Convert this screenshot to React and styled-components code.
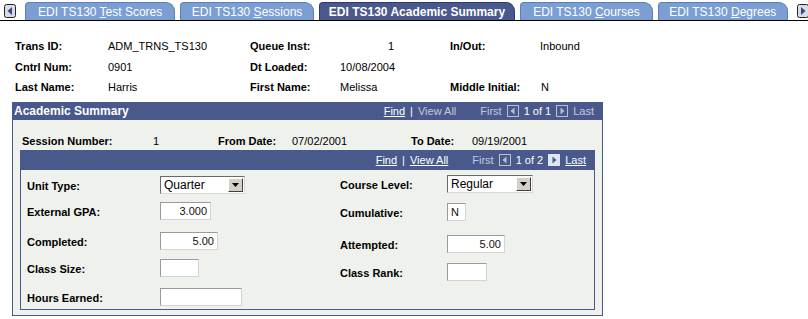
import React from 'react'
import styled, { createGlobalStyle } from 'styled-components'

const navy = '#4A598C'
const paper = '#EFF1EC'

const GlobalStyle = createGlobalStyle`
body {
    margin: 0;
    background: #fff;
    font-family: "Liberation Sans", Arial, sans-serif;
    font-size: 11px;
    color: #000;
}
`

const ScrollArrow = ({ dir }) => (
    <ScrollBtn dir={dir}>
        <svg width="12" height="14" viewBox="0 0 12 14">
            <rect x="0.5" y="0.5" width="11" height="13" rx="2" fill="#d8dce6" stroke="#222" />
            {dir === 'left'
                ? <path d="M8 3 L8 11 L3.5 7 Z" fill="#3a4a7c" />
                : <path d="M4 3 L4 11 L8.5 7 Z" fill="#3a4a7c" />}
        </svg>
    </ScrollBtn>
)

const NavButton = ({ dir, on }) => (
    <NavBtn on={on ? 1 : 0}>
        <svg width="10" height="10" viewBox="0 0 10 10">
            {dir === 'left'
                ? <path d="M6.5 1.5 L6.5 8.5 L2.5 5 Z" fill={on ? navy : '#b9bfd1'} />
                : <path d="M3.5 1.5 L3.5 8.5 L7.5 5 Z" fill={on ? navy : '#b9bfd1'} />}
        </svg>
    </NavBtn>
)

const Nav = ({ total, viewAll, last }) => (
    <NavBar>
        <NavItem on={1}>Find</NavItem>
        <span>|</span>
        <NavItem on={viewAll ? 1 : 0}>View All</NavItem>
        <NavItem gap={19}>First</NavItem>
        <NavButton dir="left" />
        <span>1 of {total}</span>
        <NavButton dir="right" on={last} />
        <NavItem on={last ? 1 : 0}>Last</NavItem>
    </NavBar>
)

const Select = ({ value, width }) => (
    <SelectBox width={width}>
        <span>{value}</span>
        <DropBtn>
            <svg width="7" height="4" viewBox="0 0 7 4"><path d="M0 0 L7 0 L3.5 4 Z" fill="#000" /></svg>
        </DropBtn>
    </SelectBox>
)

const App = () => {
    return (
        <Page>
            <GlobalStyle />
            <TabBar>
                <ScrollArrow dir="left" />
                <Tab pad={12}>EDI TS130 <u>T</u>est Scores</Tab>
                <Tab>EDI TS130 <u>S</u>essions</Tab>
                <Tab active pad={9}>EDI TS130 Academic Summary</Tab>
                <Tab pad={12}>EDI TS130 <u>C</u>ourses</Tab>
                <Tab>EDI TS130 <u>D</u>egrees</Tab>
                <ScrollArrow dir="right" />
            </TabBar>

            <HeaderGrid>
                <Label>Trans ID:</Label>
                <Value>ADM_TRNS_TS130</Value>
                <Label>Queue Inst:</Label>
                <Value indent={48}>1</Value>
                <Label>In/Out:</Label>
                <Value>Inbound</Value>

                <Label>Cntrl Num:</Label>
                <Value>0901</Value>
                <Label>Dt Loaded:</Label>
                <Value>10/08/2004</Value>
                <span />
                <span />

                <Label>Last Name:</Label>
                <Value>Harris</Value>
                <Label>First Name:</Label>
                <Value>Melissa</Value>
                <Label>Middle Initial:</Label>
                <Value indent={1}>N</Value>
            </HeaderGrid>

            <Panel>
                <PanelHead>
                    <PanelTitle>Academic Summary</PanelTitle>
                    <Nav total={1} />
                </PanelHead>
                <PanelBody>
                    <SessionRow>
                        <Label>Session Number:</Label>
                        <Value>1</Value>
                        <Label>From Date:</Label>
                        <Value>07/02/2001</Value>
                        <Label>To Date:</Label>
                        <Value>09/19/2001</Value>
                    </SessionRow>
                    <Grid>
                        <GridHead>
                            <Nav total={2} viewAll last />
                        </GridHead>
                        <GridBody>
                            <Column labelWidth={133}>
                                <Field top={6}>
                                    <Label>Unit Type:</Label>
                                    <Select value="Quarter" width={85} />
                                </Field>
                                <Field top={8}>
                                    <Label>External GPA:</Label>
                                    <Input width={51} readOnly value="3.000" />
                                </Field>
                                <Field top={12}>
                                    <Label>Completed:</Label>
                                    <Input width={58} readOnly value="5.00" />
                                </Field>
                                <Field top={9}>
                                    <Label>Class Size:</Label>
                                    <Input width={39} readOnly value="" />
                                </Field>
                                <Field top={11}>
                                    <Label>Hours Earned:</Label>
                                    <Input width={82} readOnly value="" />
                                </Field>
                            </Column>
                            <Column labelWidth={107}>
                                <Field top={5}>
                                    <Label>Course Level:</Label>
                                    <Select value="Regular" width={86} />
                                </Field>
                                <Field top={10}>
                                    <Label>Cumulative:</Label>
                                    <Input width={19} align="left" readOnly value="N" />
                                </Field>
                                <Field top={14}>
                                    <Label>Attempted:</Label>
                                    <Input width={58} readOnly value="5.00" />
                                </Field>
                                <Field top={10}>
                                    <Label>Class Rank:</Label>
                                    <Input width={40} readOnly value="" />
                                </Field>
                            </Column>
                        </GridBody>
                    </Grid>
                </PanelBody>
            </Panel>
        </Page>
    )
}

const Page = styled.div`
width: 808px;
`
const TabBar = styled.div`
display: flex;
align-items: flex-end;
height: 19px;
margin-top: 1px;
padding-left: 3px;
border-bottom: 1px solid #000;
`
const ScrollBtn = styled.span`
display: flex;
align-self: center;
margin: 0 9px 0 1px;
${({ dir }) => dir === 'right' && 'margin: 0 0 0 4px;'}
`
const Tab = styled.div`
height: 17px;
line-height: 18px;
padding: 0 ${({ pad }) => pad || 10.5}px;
margin-right: 5px;
font-size: 12px;
white-space: nowrap;
color: #fff;
font-weight: ${({ active }) => (active ? 'bold' : 'normal')};
background: ${({ active }) => (active ? navy : '#7B9FD2')};
border: 1px solid ${({ active }) => (active ? '#2f3b66' : '#5d7fb3')};
border-bottom: none;
border-radius: 4px 9px 0 0;
`
const HeaderGrid = styled.div`
display: grid;
grid-template-columns: 93px 142px 90px 110px 90px auto;
grid-auto-rows: 20.5px;
align-items: center;
padding: 15px 0 0 15px;
`
const Label = styled.span`
font-weight: bold;
white-space: nowrap;
`
const Value = styled.span`
padding-left: ${({ indent }) => indent || 0}px;
white-space: nowrap;
`
const Panel = styled.div`
width: 589px;
margin: 4px 0 0 12px;
border: 1px solid ${navy};
background: ${paper};
`
const PanelHead = styled.div`
display: flex;
align-items: center;
justify-content: space-between;
height: 17px;
background: ${navy};
padding: 0 8px 0 1px;
`
const PanelTitle = styled.span`
color: #fff;
font-weight: bold;
font-size: 12px;
`
const NavBar = styled.div`
display: flex;
align-items: center;
gap: 5px;
color: #fff;
font-size: 11px;
`
const NavItem = styled.span`
margin-left: ${({ gap }) => gap || 0}px;
color: ${({ on }) => (on ? '#fff' : '#c3c9db')};
text-decoration: ${({ on }) => (on ? 'underline' : 'none')};
`
const NavBtn = styled.span`
box-sizing: border-box;
display: flex;
align-items: center;
justify-content: center;
width: 12px;
height: 12px;
border: 1px solid ${({ on }) => (on ? '#dfe6f5' : '#b9bfd1')};
background: ${({ on }) => (on ? '#dfe6f5' : navy)};
`
const PanelBody = styled.div`
padding: 0 7px 5px 7px;
`
const SessionRow = styled.div`
display: grid;
grid-template-columns: 131px 65px 74px 119px 61px auto;
height: 16px;
padding: 14px 0 0 2px;
line-height: 14px;
`
const Grid = styled.div`
border: 1px solid ${navy};
`
const GridHead = styled.div`
display: flex;
align-items: center;
justify-content: flex-end;
height: 19px;
background: ${navy};
padding-right: 8px;
`
const GridBody = styled.div`
display: grid;
grid-template-columns: 313px auto;
padding: 0 0 3px 6px;
`
const Column = styled.div`
display: flex;
flex-direction: column;
& > div > span:first-child {
    width: ${({ labelWidth }) => labelWidth}px;
}
`
const Field = styled.div`
display: flex;
align-items: center;
height: 18px;
margin-top: ${({ top }) => top}px;
& > span:first-child {
    padding-top: 3px;
    flex: none;
}
`
const Input = styled.input`
box-sizing: border-box;
width: ${({ width }) => width}px;
height: 18px;
padding: 0 3px;
font: 11px "Liberation Sans", Arial, sans-serif;
color: #111;
text-align: ${({ align }) => align || 'right'};
background: #fff;
border: 1px solid #d4d4d4;
border-top-color: #9a9a9a;
border-left-color: #9a9a9a;
outline: none;
`
const SelectBox = styled.div`
box-sizing: border-box;
display: flex;
align-items: center;
justify-content: space-between;
width: ${({ width }) => width}px;
height: 18px;
padding: 0 1px 0 3px;
background: #fff;
border: 1px solid #d8d8d8;
border-top-color: #6a6a6a;
border-left-color: #6a6a6a;
font-size: 12px;
`
const DropBtn = styled.span`
box-sizing: border-box;
display: flex;
align-items: center;
justify-content: center;
width: 15px;
height: 14px;
background: #d4d0c8;
border: 1px solid #fff;
border-right-color: #404040;
border-bottom-color: #404040;
`

export default App
